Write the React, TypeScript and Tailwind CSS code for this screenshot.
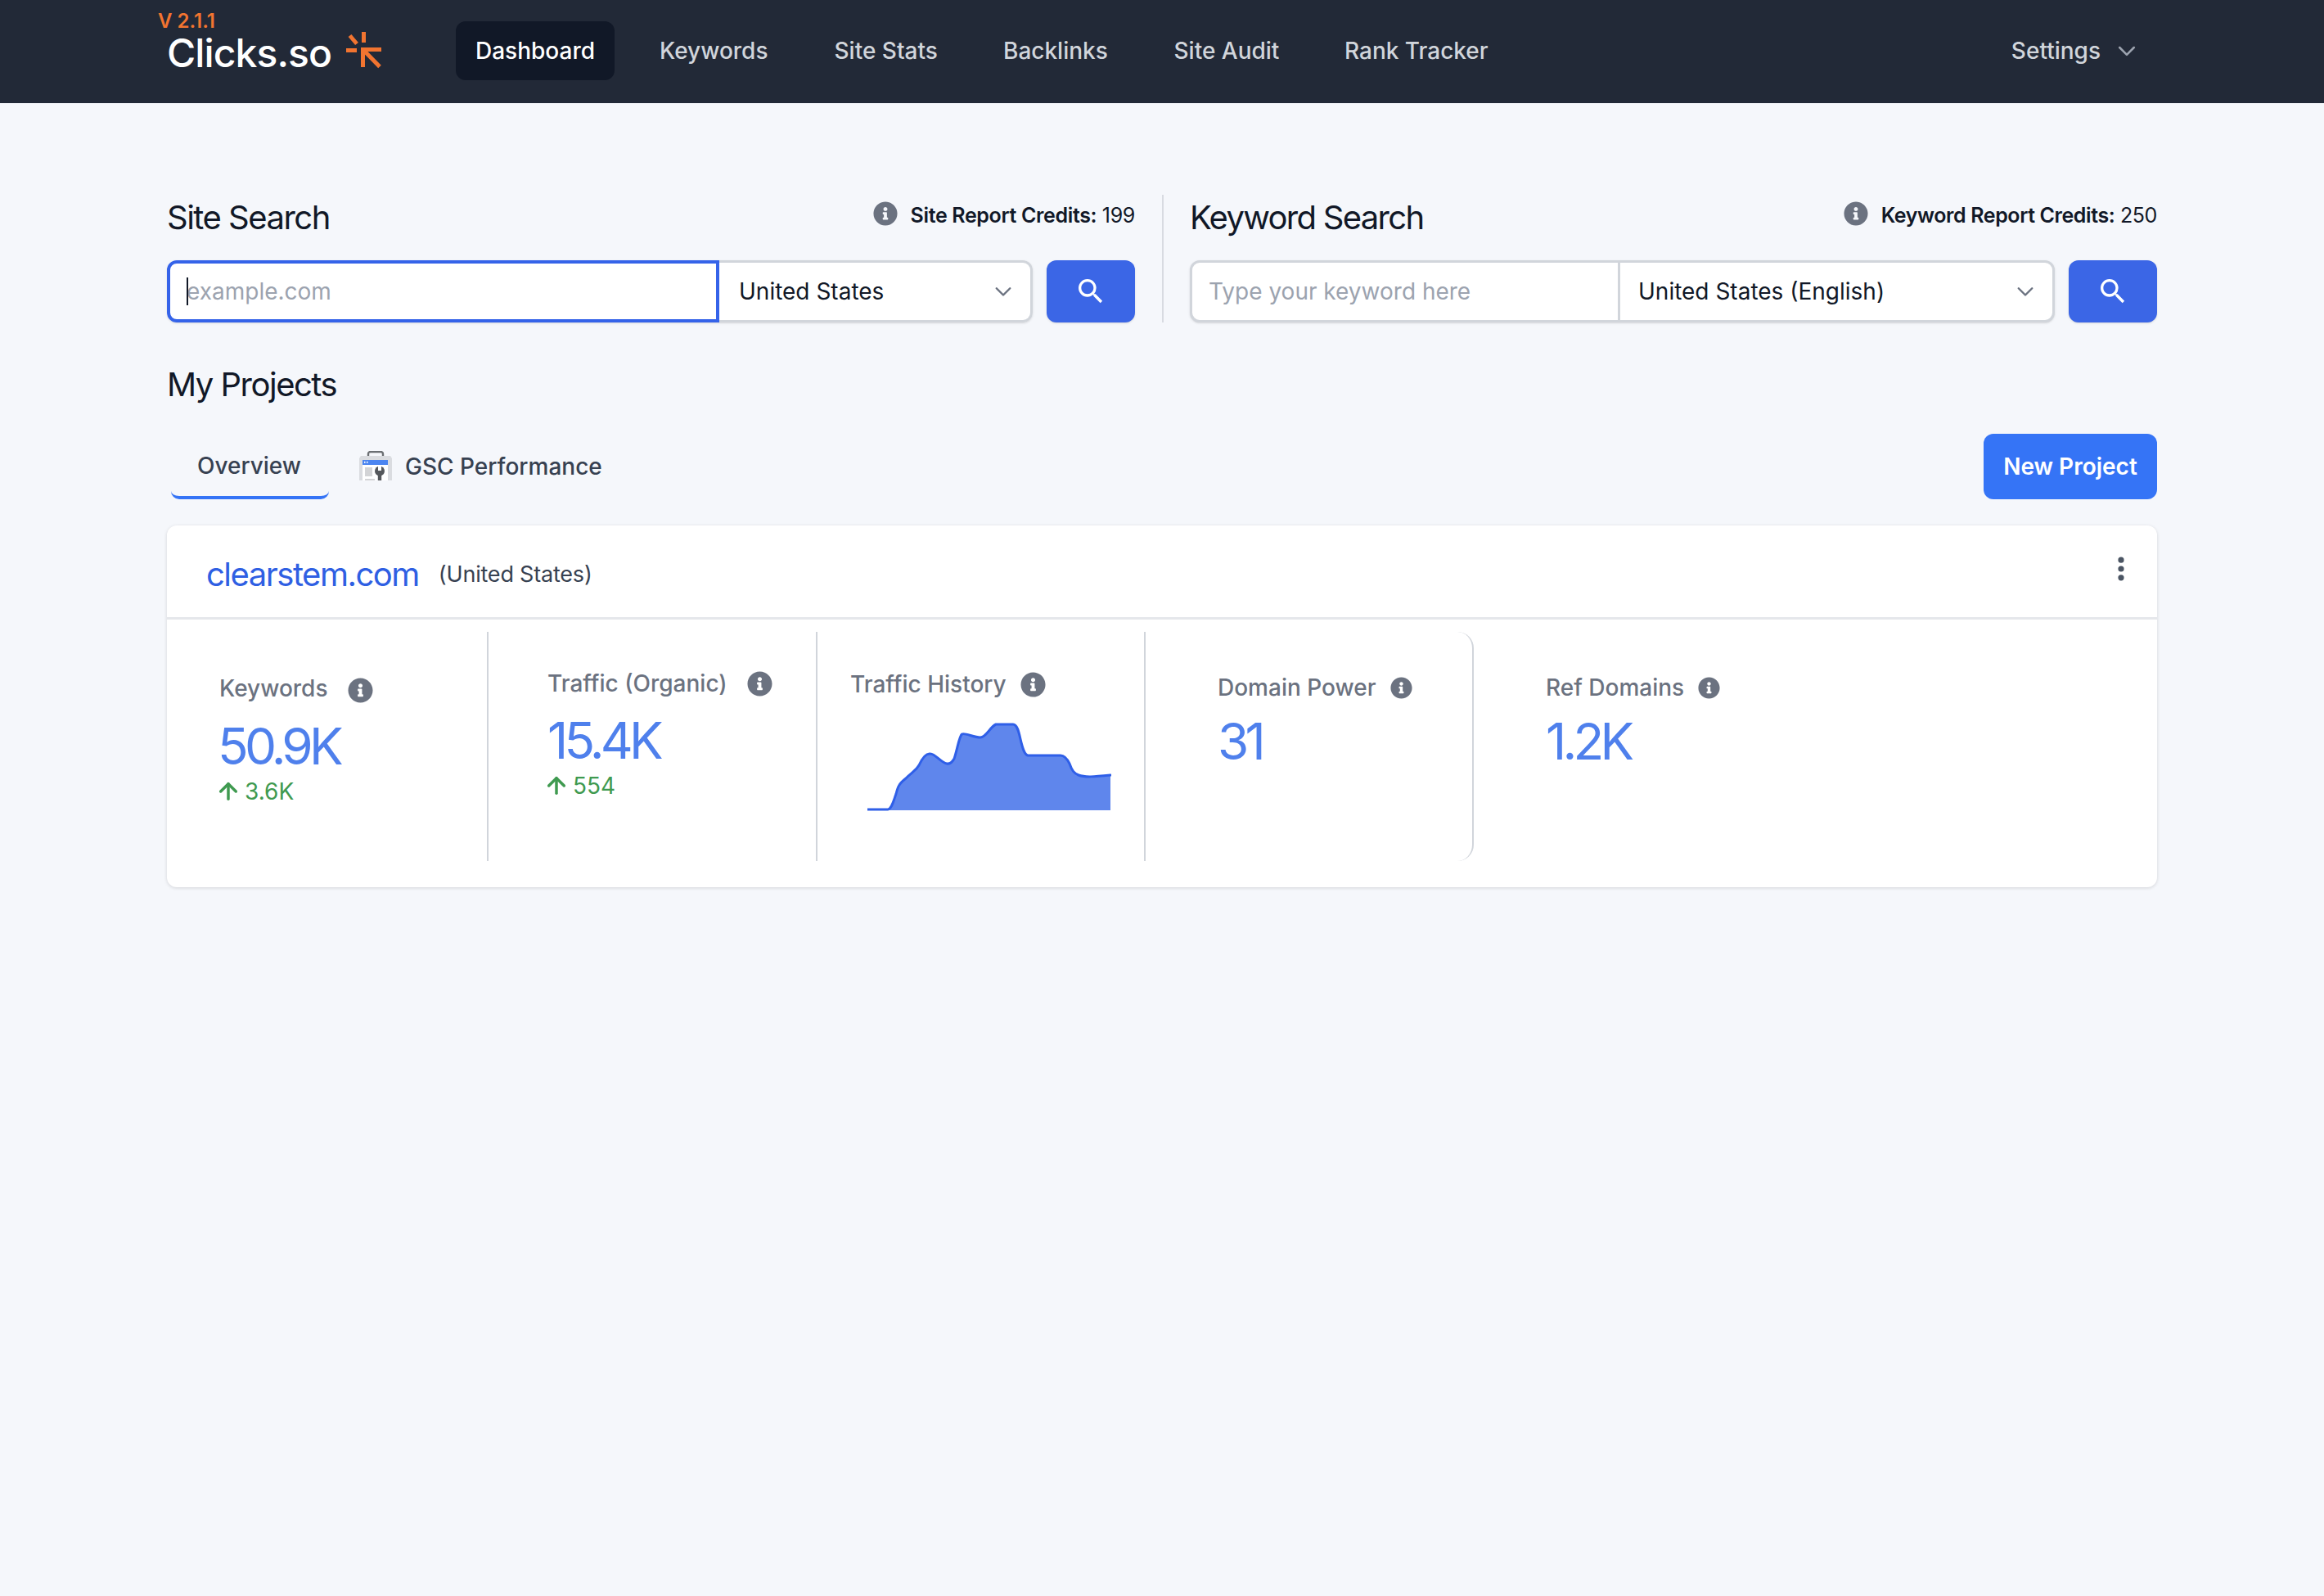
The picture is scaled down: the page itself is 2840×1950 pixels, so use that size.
import { ArrowUp } from "lucide-react";
import { FaInfoCircle } from "react-icons/fa";
import { MdSearch } from "react-icons/md";
import { HiDotsVertical } from "react-icons/hi";

function Chevron({ className }: { className: string }) {
  return (
    <svg viewBox="0 0 20 20" fill="none" className={className}>
      <path d="M4.500 7.500 10 13l5.500-5.500" stroke="currentColor" strokeWidth="1.6" strokeLinecap="round" strokeLinejoin="round" />
    </svg>
  );
}

function Logo() {
  return (
    <svg viewBox="0 0 50 50" className="w-[50px] h-[50px]" fill="none" stroke="#f27430" strokeWidth="5">
      <path d="M24.500 3v13M3 25.500h13M7.500 7.500l8.500 10" />
      <path d="M21 24.500h25M23.500 22v24M24 25l20 20.500" />
    </svg>
  );
}

function GscIcon() {
  return (
    <svg viewBox="0 0 40 38" className="w-[40px] h-[38px] shrink-0">
      <path d="M11 7V3.500Q11 1 14 1h12q3 0 3 2.500V7" fill="none" stroke="#6b6f73" strokeWidth="2.400" />
      <path d="M2 6h36l2 3v27H0V9z" fill="#dadce0" />
      <rect x="4" y="11" width="31" height="6" fill="#4b85f1" />
      <rect x="6" y="12.800" width="1.500" height="2" fill="#fff" />
      <rect x="9" y="12.800" width="1.500" height="2" fill="#fff" />
      <rect x="4" y="17" width="31" height="19" fill="#fff" />
      <rect x="7" y="20" width="9" height="11" fill="#d3d4d6" />
      <rect x="7" y="34" width="12" height="2" fill="#d3d4d6" />
      <circle cx="25" cy="24.500" r="6" fill="#54575b" />
      <rect x="23" y="17.500" width="4" height="6.500" fill="#fff" />
      <rect x="22.800" y="28" width="4.400" height="8" fill="#54575b" />
    </svg>
  );
}

function Info({ className }: { className: string }) {
  return <FaInfoCircle className={`text-[#6b7280] shrink-0 ${className}`} />;
}

function Delta({ value, marginTop }: { value: string; marginTop: string }) {
  return (
    <div className={`flex items-center gap-[9px] text-[#3f9a50] text-[28px] leading-[34px] ${marginTop}`}>
      <ArrowUp className="w-[32px] h-[36px] -mx-[5px]" strokeWidth={2.6} />
      <span>{value}</span>
    </div>
  );
}

const navLinks = [
  { label: "Keywords", cls: "w-[133px]" },
  { label: "Site Stats", cls: "w-[126px]" },
  { label: "Backlinks", cls: "w-[128px]" },
  { label: "Site Audit", cls: "w-[128px]" },
  { label: "Rank Tracker", cls: "w-[176px]" },
];

export default function App() {
  return (
    <div className="min-h-[1950px] bg-[#f5f7fb] font-['Inter',sans-serif] text-[#111827]">
      <nav className="h-[126px] bg-[#222937] flex items-center pl-[204px] pr-[225px]">
        <div className="relative w-[353px] flex items-center h-full">
          <span className="absolute left-[-11px] top-[12px] text-[24px] leading-[28px] font-semibold text-[#f27430]">V 2.1.1</span>
          <span className="text-[48px] leading-[60px] text-white font-medium tracking-[-0.9px] mt-[3px]">Clicks.so</span>
          <span className="absolute left-[216px] top-[36px]"><Logo /></span>
        </div>
        <a className="h-[72px] w-[194px] rounded-[12px] bg-[#111827] text-white flex items-center justify-center text-[28px] font-medium mt-[-2px]">Dashboard</a>
        <div className="flex items-center gap-[80.500px] ml-[55px] text-[28px] font-medium text-[#d1d5db] mt-[-2px]">
          {navLinks.map((l) => (
            <a key={l.label} className={`${l.cls} whitespace-nowrap`}>{l.label}</a>
          ))}
        </div>
        <div className="ml-auto flex items-center gap-[16px] text-[28px] font-medium text-[#d1d5db] mt-[-2px]">
          <span>Settings</span>
          <Chevron className="w-[32px] h-[32px] text-[#9ca3af]" />
        </div>
      </nav>

      <main className="pl-[204px] pr-[204px] pt-[112px]">
        <div className="flex">
          <section className="w-[1218px] pr-[33px] border-r-2 border-[#d8dbe1]">
            <div className="flex justify-between h-[80px]">
              <h2 className="text-[40px] leading-[54px] tracking-[-1.5px] font-normal mt-[1px]">Site Search</h2>
              <div className="flex items-start gap-[16px] pt-[7px] text-[25px] leading-[36px] tracking-[-0.35px]">
                <Info className="w-[30px] h-[32px] ml-[-2px]" />
                <span><b className="font-semibold">Site Report Credits:</b> 199</span>
              </div>
            </div>
            <div className="flex h-[76px] gap-[17px]">
              <div className="flex flex-1 rounded-[12px] shadow-sm bg-white">
                <div className="relative w-[675px] border-[4px] border-[#3563e9] rounded-l-[12px] flex items-center pl-[20px] bg-white">
                  <input placeholder="example.com" readOnly className="w-full outline-none bg-transparent text-[28px] placeholder:text-[#9ca3af]" />
                  <span className="absolute left-[20px] top-[17px] w-[2px] h-[34px] bg-[#111827]" />
                </div>
                <div className="flex-1 border-y-[3px] border-r-[3px] border-[#d1d5db] rounded-r-[12px] flex items-center justify-between pl-[24px] pr-[18px] text-[28px]">
                  <span>United States</span>
                  <Chevron className="w-[30px] h-[30px] text-[#6b7280]" />
                </div>
              </div>
              <button className="w-[108px] h-[76px] rounded-[12px] bg-[#3b66e6] text-white flex items-center justify-center shadow-sm">
                <MdSearch className="w-[40px] h-[40px]" />
              </button>
            </div>
          </section>
          <section className="flex-1 pl-[32px]">
            <div className="flex justify-between h-[80px]">
              <h2 className="text-[40px] leading-[54px] tracking-[-1.7px] font-normal mt-[1px]">Keyword Search</h2>
              <div className="flex items-start gap-[16px] pt-[7px] text-[25px] leading-[36px] tracking-[-0.4px]">
                <Info className="w-[30px] h-[32px]" />
                <span><b className="font-semibold">Keyword Report Credits:</b> 250</span>
              </div>
            </div>
            <div className="flex h-[76px] gap-[17px]">
              <div className="flex flex-1 rounded-[12px] shadow-sm bg-white border-[3px] border-[#d1d5db]">
                <div className="w-[523px] border-r-[3px] border-[#d1d5db] flex items-center pl-[20px]">
                  <input placeholder="Type your keyword here" readOnly className="w-full outline-none bg-transparent text-[28px] placeholder:text-[#9ca3af]" />
                </div>
                <div className="flex-1 flex items-center justify-between pl-[22px] pr-[18px] text-[28px]">
                  <span>United States (English)</span>
                  <Chevron className="w-[30px] h-[30px] text-[#6b7280]" />
                </div>
              </div>
              <button className="w-[108px] h-[76px] rounded-[12px] bg-[#3b66e6] text-white flex items-center justify-center shadow-sm">
                <MdSearch className="w-[40px] h-[40px]" />
              </button>
            </div>
          </section>
        </div>

        <h2 className="text-[40px] leading-[54px] tracking-[-1.5px] font-normal mt-[49px]">My Projects</h2>

        <div className="flex items-center justify-between mt-[33px] h-[80px]">
          <div className="flex items-center h-full text-[28px] font-medium text-[#374151]">
            <div className="w-[193px] ml-[5px] h-full rounded-b-[10px] border-b-[4px] border-[#3574f6] flex items-center justify-center pr-[2px] pt-[2px]">Overview</div>
            <div className="flex items-center gap-[16px] ml-[37px] h-full pb-[1px]">
              <GscIcon />
              <span>GSC Performance</span>
            </div>
          </div>
          <button className="w-[212px] h-[80px] rounded-[12px] bg-[#3574f6] text-white text-[28px] font-semibold">New Project</button>
        </div>

        <div className="mt-[32px] h-[442px] bg-white rounded-[12px] shadow-[0_1px_4px_rgba(0,0,0,0.14)]">
          <div className="h-[115px] border-b-[3px] border-[#e5e7eb] flex items-center pl-[48px] pr-[36px]">
            <span className="text-[40px] tracking-[-1.5px] text-[#2f5fe3] leading-[50px] mt-[8px]">clearstem.com</span>
            <span className="text-[27px] tracking-[-0.2px] text-[#374151] ml-[24px] mt-[9px]">(United States)</span>
            <HiDotsVertical className="ml-auto w-[36px] h-[36px] text-[#4b5563] mt-[-6px] mr-[-10px]" />
          </div>
          <div className="flex h-[280px] mt-[15px]">
            <div className="w-[393px] h-full border-r-2 border-[#d1d5db] pl-[64px] pt-[51px]">
              <div className="flex items-center gap-[24px] h-[36px] text-[28px] text-[#6b7280] font-medium">
                <span>Keywords</span>
                <Info className="w-[31px] h-[33px] mt-[4px]" />
              </div>
              <div className="text-[62px] leading-[70px] tracking-[-4.800px] text-[#4f80ec] mt-[18px] ml-[-2px]">50.9K</div>
              <Delta value="3.6K" marginTop="mt-[2px]" />
            </div>
            <div className="w-[402px] h-full border-r-2 border-[#d1d5db] pl-[72px] pt-[45px]">
              <div className="flex items-center gap-[24px] h-[36px] text-[28px] text-[#6b7280] font-medium">
                <span>Traffic (Organic)</span>
                <Info className="w-[31px] h-[33px]" />
              </div>
              <div className="text-[62px] leading-[70px] tracking-[-4.800px] text-[#4f80ec] mt-[17px]">15.4K</div>
              <Delta value="554" marginTop="mt-[2px]" />
            </div>
            <div className="w-[401px] h-full border-r-2 border-[#d1d5db] pl-[40px] pt-[46px]">
              <div className="flex items-center gap-[17px] h-[36px] text-[28px] text-[#6b7280] font-medium">
                <span>Traffic History</span>
                <Info className="w-[31px] h-[33px]" />
              </div>
              <svg viewBox="0 0 298 112" className="w-[298px] h-[112px] ml-[21px] mt-[26px]">
                <path
                  d="M0 109H25C30 108 32 98 35 90C37 82 38 78 47 71C55 63 59 62 63 55C68 44 72 40 77 41C83 41 90 52 97 53C102 54 104 50 106 47C110 35 112 20 115.500 17C119 15 130 21 138 21C145 21 150 8 157 5H178C183 5 185 14 187 23C190 36 192 42 196 43H236C241 43 244 47 247 53C250 62 253 65 258 67C266 70 277 69 297 67V110H25z"
                  fill="#5f86ec"
                />
                <path
                  d="M0 109H25C30 108 32 98 35 90C37 82 38 78 47 71C55 63 59 62 63 55C68 44 72 40 77 41C83 41 90 52 97 53C102 54 104 50 106 47C110 35 112 20 115.500 17C119 15 130 21 138 21C145 21 150 8 157 5H178C183 5 185 14 187 23C190 36 192 42 196 43H236C241 43 244 47 247 53C250 62 253 65 258 67C266 70 277 69 297 67"
                  fill="none"
                  stroke="#2f5fe8"
                  strokeWidth="3"
                  strokeLinecap="round"
                />
              </svg>
            </div>
            <div className="w-[401px] h-full border-r-2 border-[#d1d5db] rounded-r-[20px] pl-[88px] pt-[50px]">
              <div className="flex items-center gap-[17px] h-[36px] text-[28px] text-[#6b7280] font-medium">
                <span>Domain Power</span>
                <Info className="w-[27px] h-[29px]" />
              </div>
              <div className="text-[62px] leading-[70px] tracking-[-4.800px] text-[#4f80ec] mt-[13px]">31</div>
            </div>
            <div className="flex-1 h-full pl-[88px] pt-[50px]">
              <div className="flex items-center gap-[17px] h-[36px] text-[28px] text-[#6b7280] font-medium">
                <span>Ref Domains</span>
                <Info className="w-[27px] h-[29px]" />
              </div>
              <div className="text-[62px] leading-[70px] tracking-[-4.800px] text-[#4f80ec] mt-[13px]">1.2K</div>
            </div>
          </div>
        </div>
      </main>
    </div>
  );
}
